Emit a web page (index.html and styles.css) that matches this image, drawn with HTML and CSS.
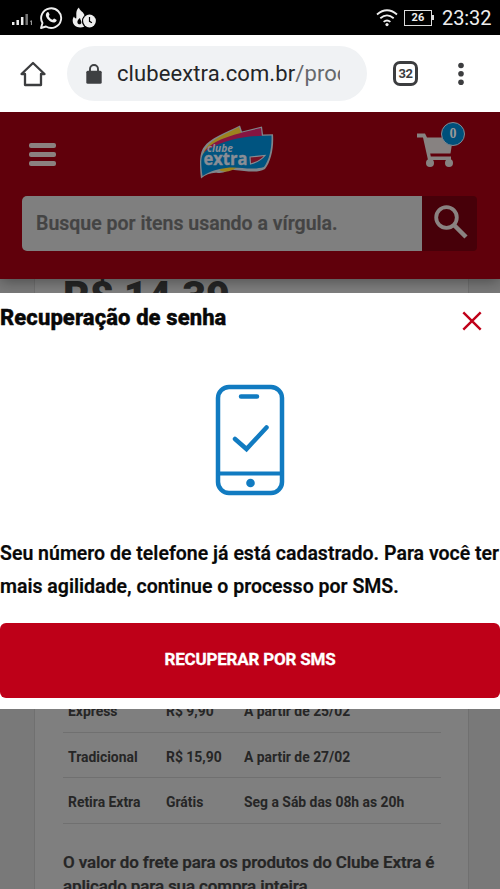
FILE: index.html
```html
<!DOCTYPE html>
<html lang="pt-BR">
<head>
<meta charset="utf-8">
<title>Clube Extra</title>
<link rel="stylesheet" href="styles.css">
</head>
<body>
<div class="status">
  <svg class="signal" width="22" height="16" viewBox="0 0 22 16"><path d="M1.2 11v3M5.7 9v5M10.2 6v8" stroke="#eee" stroke-width="2.5"/><path d="M14.7 3v11" stroke="#777" stroke-width="2.5"/><path d="M18.2 10.5l1.2-.8V14" stroke="#aaa" fill="none"/></svg>
  <svg class="whats" width="24" height="24" viewBox="0 0 24 24"><path d="M2 22l1.500-5A10 9.800 0 1 1 7 20.500z" fill="none" stroke="#eee" stroke-width="1.900" stroke-linejoin="round"/><path d="M8.300 6.200c.6-.4 1.200-.1 1.400.4l.8 1.900c.2.500-.9 1.300-.7 1.700.8 1.700 2 2.800 3.800 3.500.6.100 1.100-1.300 1.600-1.100l2.200 1.100c.8.500-.2 2.200-1.400 2.600-2.400.7-5-.9-6.900-2.900C7.200 11.300 5.600 8.400 8.300 6.200z" fill="#eee"/></svg>
  <svg class="flame" width="25" height="22" viewBox="0 0 25 22"><path d="M7 .5c0 3 5.500 4.500 5.500 8.500-3 2-3.300 7 0 10.500C7 22 1 19.500.7 14c-.1-1.900.4-3.300 1.300-4.500.4 1.300 1.200 2 2.200 2C5 8.500 2.800 4 7 .5z" fill="#eee"/><path d="M5.500 16c-.5-2.200.7-3.500 2.500-5 .3 2 1.400 2.500 1.400 4.500S6.500 18 5.500 16z" fill="#000"/><circle cx="17.500" cy="14" r="7.500" fill="#000"/><circle cx="17.500" cy="14" r="6.400" fill="#eee"/><path d="M17.500 10v4.300l2.400 1.500" stroke="#000" stroke-width="1.200" fill="none"/></svg>
  <svg class="wifi" width="22" height="18" viewBox="0 0 22 18"><path d="M1 5.500q10-8.500 20 0M4.300 9.200q6.700-5.700 13.400 0M7.600 12.900q3.400-2.900 6.800 0" fill="none" stroke="#eee" stroke-width="1.800"/><circle cx="11" cy="15.600" r="1.600" fill="#eee"/></svg>
  <span class="battery">26</span>
  <span class="clock">23:32</span>
</div>
<div class="toolbar">
  <svg class="home" width="26" height="26" viewBox="0 0 26 26"><path d="M1.500 13L13 2l11.500 11H21v11H5V13z" fill="none" stroke="#3c3d3f" stroke-width="2.300" stroke-linejoin="round"/></svg>
  <div class="omnibox">
    <svg width="16" height="20" viewBox="0 0 16 20"><path d="M4 8V5a4 4 0 0 1 8 0v3" fill="none" stroke="#3e4042" stroke-width="1.900"/><rect x=".3" y="6.700" width="15.400" height="13" rx="1.500" fill="#3e4042"/></svg>
    <div class="url">clubeextra.com.br<span>/prod</span></div>
  </div>
  <div class="tabs">32</div>
  <svg class="dots" width="6" height="24" viewBox="0 0 6 24" fill="#3c3d3f"><circle cx="3" cy="3.500" r="2.800"/><circle cx="3" cy="11.800" r="2.800"/><circle cx="3" cy="20.200" r="2.800"/></svg>
</div>
<div class="page">
  <header class="header">
    <div class="topline">
      <div class="menu"><i></i><i></i><i></i></div>
      <svg class="logo" width="76" height="57" viewBox="0 0 76 57">
        <path d="M2 54.500C0 38 1 28 5 23 11 14 26 9 41 1.500l2 6 20-5 1 8 10-.3C75 24 72 37 66 45c-9 4.500-18 2-31 1-6-1-9 3.800-16 3-6-.8-12 1.500-17 5.500z" fill="#80858b"/>
        <path d="M3 42C1 17 22 13 40 3l2 6-10 9z" fill="#9d831f"/>
        <path d="M5 28C14 15 36 10 62 4l1 9-25 7z" fill="#861441"/>
        <path d="M20 46c8 4 12 0 20-3l-9-3z" fill="#9d831f"/>
        <path d="M3.500 52C1 34 2 29 10 25c18-10 38-13.500 62.500-13.500C73 25 70 36 65 43c-14 4-25-1-38 1-9 1-15 3-23.500 8z" fill="#005480"/>
        <path d="M51 33l15-1.500c-4 5-9 7-14.500 8.500z" fill="#771326" stroke="#888d94" stroke-width="1.100"/>
        <text class="logo-small" x="8" y="28" textLength="26" lengthAdjust="spacingAndGlyphs">clube</text>
        <text class="logo-large" x="4.500" y="41" textLength="44" lengthAdjust="spacingAndGlyphs">extra</text>
      </svg>
      <div class="cart">
        <svg width="38" height="36" viewBox="0 0 38 36"><path d="M0 1.500h8l2 4h26l-2.500 16H13.200l.6 3H34v3.500H11L6 5.500H0z" fill="#878281"/><circle cx="13" cy="31" r="4" fill="#878281"/><circle cx="32" cy="31" r="4" fill="#878281"/></svg>
        <span class="badge">0</span>
      </div>
    </div>
    <div class="search">
      <div class="field">Busque por itens usando a vírgula.</div>
      <div class="go"><svg width="34" height="34" viewBox="0 0 34 34" fill="none" stroke="#8a8281"><circle cx="12.500" cy="12.500" r="10.300" stroke-width="3.800"/><path d="M20 20l12 12" stroke-width="4.500"/></svg></div>
    </div>
  </header>
  <main class="card">
    <div class="price">R$ 14,39</div>
    <div class="shipping">
      <span>Express</span><span>R$ 9,90</span><span>A partir de 25/02</span>
      <span>Tradicional</span><span>R$ 15,90</span><span>A partir de 27/02</span>
      <span>Retira Extra</span><span>Grátis</span><span>Seg a Sáb das 08h as 20h</span>
    </div>
    <p class="note">O valor do frete para os produtos do Clube Extra é<br>aplicado para sua compra inteira.</p>
  </main>
  <section class="modal">
    <div class="modal-head">
      <h1>Recuperação de senha</h1>
      <svg width="20" height="20" viewBox="0 0 20 20"><path d="M1.300 1.300l17.400 17.400M18.700 1.300L1.300 18.700" stroke="#c00019" stroke-width="2.400"/></svg>
    </div>
    <svg class="phone" width="70" height="112" viewBox="0 0 70 112" fill="none" stroke="#117bc1" stroke-width="4.500" stroke-linecap="round"><rect x="3" y="3" width="64" height="106" rx="11"/><path d="M3 89.500h64" stroke-width="3.800"/><path d="M26 12.500h16M20 55l11.500 10L51.500 43.500"/><circle cx="35.500" cy="99" r="4.300" fill="#117bc1" stroke="none"/></svg>
    <p class="message">Seu número de telefone já está cadastrado. Para você ter<br>mais agilidade, continue o processo por SMS.</p>
    <button class="action">RECUPERAR POR SMS</button>
  </section>
</div>
</body>
</html>
```
FILE: styles.css
```css
* { box-sizing: border-box; }
body { margin: 0; width: 500px; height: 889px; overflow: hidden; font-family: Roboto, sans-serif; background: #fff; }
svg { display: block; flex: none; }
.status { height: 35px; background: #000; color: #eee; display: flex; align-items: center; padding: 0 9px 0 12px; }
.signal { margin-top: 2px; }
.whats { margin-left: 5px; }
.flame { margin-left: 9px; }
.wifi { margin-left: auto; }
.battery { position: relative; width: 28px; height: 16px; margin-left: 6px; border: 1.5px solid #ddd; font-size: 11px; font-weight: 700; line-height: 14px; text-align: center; letter-spacing: .3px; }
.battery::after { content: ""; position: absolute; right: -3px; top: 4px; width: 2px; height: 5px; background: #ddd; }
.clock { margin: 1px 0 0 10px; font-size: 20px; line-height: 35px; width: 49px; letter-spacing: -.1px; white-space: nowrap; }
.toolbar { height: 77px; display: flex; align-items: center; padding: 0 36px 0 20px; }
.omnibox { width: 300px; height: 55px; margin-left: 21px; padding: 0 27px 0 19px; border-radius: 28px; background: #f0f2f4; display: flex; align-items: center; gap: 15px; }
.url { flex: 1; overflow: hidden; white-space: nowrap; font-size: 22px; line-height: 34px; padding-top: 1px; color: #242528; letter-spacing: .1px; }
.url span { color: #66696d; }
.tabs { width: 25px; height: 25px; margin-left: 26px; border: 3px solid #3c3d3f; border-radius: 7px; font-size: 13px; font-weight: 700; line-height: 20px; text-align: center; letter-spacing: -.5px; color: #3c3d3f; }
.dots { margin-left: auto; }
.page { position: relative; height: 777px; background: #797979; overflow: hidden; }
.header { position: relative; height: 167px; background: #60000b; box-shadow: 0 2px 14px rgba(0,0,0,.4); padding: 0 23px 0 22px; }
.topline { height: 84px; display: flex; align-items: flex-start; justify-content: space-between; padding: 0 0 0 7px; }
.menu { width: 27px; display: flex; flex-direction: column; gap: 4px; margin-top: 31px; }
.menu i { height: 5px; border-radius: 2px; background: #8b8180; }
.logo { margin: 12px 0 0 1px; }
.logo-small, .logo-large { fill: #898e96; font-weight: 700; font-family: "Open Sans", sans-serif; }
.logo-small { font-size: 10px; font-style: italic; }
.logo-large { font-size: 18px; stroke: #898e96; stroke-width: .4px; }
.cart { position: relative; width: 60px; padding-top: 20px; }
.badge { position: absolute; left: 24px; top: 10px; width: 24px; height: 24px; border: 1.500px solid #878990; border-radius: 50%; background: #00507b; color: #999; font: 700 14px/21px "Liberation Serif", serif; text-align: center; }
.search { display: flex; height: 55px; }
.field { width: 400px; border-radius: 5px 0 0 5px; padding-left: 14px; background: #7f7f7f; color: #444; font-size: 19.5px; font-weight: 600; line-height: 55px; white-space: nowrap; -webkit-text-stroke: .2px #444; }
.go { width: 55px; display: flex; align-items: center; justify-content: center; background: #470009; border-radius: 0 4px 4px 0; padding: 0 0 3px 3px; }
.card { width: 435px; height: 700px; margin-left: 34px; padding: 0 28px; background: #7f7f7f; border: solid #707070; border-width: 0 1px; color: #262626; }
.price { height: 408px; font-size: 41px; font-weight: 900; line-height: 34px; white-space: nowrap; }
.shipping { display: grid; grid-template-columns: 103px 78px 1fr; width: 378px; }
.shipping span { height: 45.700px; font-size: 13.900px; font-weight: 700; line-height: 49px; white-space: nowrap; border-bottom: 1px solid #707070; }
.shipping span:nth-child(3n+1) { padding-left: 5px; }
.note { margin: 26px 0 0; font-size: 17px; font-weight: 600; line-height: 24px; letter-spacing: -.13px; white-space: nowrap; -webkit-text-stroke: .2px #262626; }
.modal { position: absolute; left: 0; top: 181px; width: 500px; height: 416px; background: #fff; color: #080808; display: flex; flex-direction: column; align-items: center; }
.modal-head { width: 500px; height: 90.500px; display: flex; justify-content: space-between; align-items: flex-start; padding: 18px 18px 0 0; }
.modal h1 { margin: -8px 0 0; font-size: 22px; font-weight: 800; line-height: 30px; letter-spacing: .1px; white-space: nowrap; -webkit-text-stroke: .4px #080808; }
.message { width: 500px; margin: 41px 0 0; font-size: 19.500px; font-weight: 600; line-height: 33.500px; white-space: nowrap; -webkit-text-stroke: .2px #080808; }
.action { width: 500px; height: 75px; margin-top: 19.500px; padding: 0; border: 0; border-radius: 6px; background: #be0018; color: #fff; font: 700 17px/73px Roboto, sans-serif; letter-spacing: -.2px; white-space: nowrap; padding-bottom: 2px; -webkit-text-stroke: .3px #fff; }
```
